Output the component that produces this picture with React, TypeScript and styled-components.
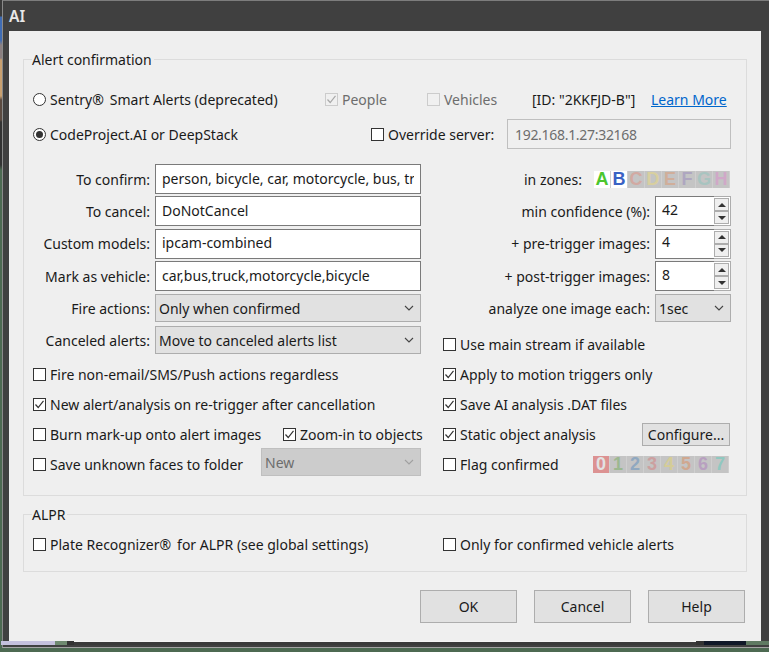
import React from 'react';
import styled, { createGlobalStyle } from 'styled-components';

const GlobalStyle = createGlobalStyle`
  html, body { margin: 0; padding: 0; background: #3a3f3c; overflow: hidden; }
  * { box-sizing: border-box; }
`;

// the desktop wallpaper only shows as a thin strip left of and below the window
const Desktop = styled.div`
  width: 769px;
  height: 652px;
  padding-left: 2px;
  font-family: "Noto Sans", "Liberation Sans", sans-serif;
  font-size: 14px;
  color: #1a1a1a;
  background: linear-gradient(
    #3a3a3a 0 16px, #3f6cb4 17px 40px, #8a7f80 45px 58px, #c8a070 60px 96px,
    #5a4a40 100px 120px, #333 122px 165px, #4d6a52 170px 648px
  );
`;

const Frame = styled.div`
  height: 648px;
  background: #404040;
  border-top: 1px solid #7d7d7d;
  border-left: 1px solid #8a8a8a;
  border-bottom: 1px solid #a4a4a4;
  padding-right: 8px;
  display: flex;
  flex-direction: column;
`;

const TitleBar = styled.div`
  height: 30px;
  padding-left: 6px;
  display: flex;
  align-items: center;
  color: #e8e8e8;
  font-weight: 600;
  font-size: 15.5px;
`;

const Content = styled.div`
  margin-left: 6px;
  width: 752px;
  height: 610px;
  flex: none;
  background: #efefef;
  padding: 28px 0 0 14px;
`;

const BottomStrip = styled.div`
  height: 4px;
  margin-left: -2px;
  display: flex;
  background: #3a3a3a;
`;

const StripPart = styled.div<{ $w: number; $c: string }>`
  width: ${p => p.$w}px;
  flex: none;
  background: ${p => p.$c};
`;

const WhiteLine = styled(StripPart)`
  height: 1px;
`;

const Group = styled.div<{ $h: number }>`
  position: relative;
  width: 724px;
  height: ${p => p.$h}px;
  border: 1px solid #dcdcdc;
  padding-left: 9px;
`;

const Legend = styled.span`
  position: absolute;
  top: -9px;
  left: 8px;
  height: 18px;
  line-height: 18px;
  padding-right: 2px;
  background: #efefef;
`;

const Row = styled.div<{ $top?: number }>`
  display: flex;
  align-items: center;
  height: 30px;
  margin-top: ${p => p.$top ?? 0}px;
`;

const Slot = styled.div<{ $w: number }>`
  width: ${p => p.$w}px;
  flex: none;
  display: flex;
  align-items: center;
`;

const Option = styled.label<{ $off?: boolean }>`
  display: inline-flex;
  align-items: center;
  gap: 4px;
  white-space: nowrap;
  color: ${p => (p.$off ? '#6d6d6d' : 'inherit')};
`;

const Box = styled.span<{ $off?: boolean }>`
  width: 13px;
  height: 13px;
  flex: none;
  display: flex;
  background: ${p => (p.$off ? '#f0f0f0' : '#fff')};
  border: 1px solid ${p => (p.$off ? '#cccccc' : '#333')};
`;

const Dial = styled.span`
  width: 13px;
  height: 13px;
  flex: none;
  display: flex;
  align-items: center;
  justify-content: center;
  background: #fff;
  border: 1px solid #333;
  border-radius: 50%;
`;

const Dot = styled.span`
  width: 7px;
  height: 7px;
  border-radius: 50%;
  background: #333;
`;

const IdText = styled.span`
  white-space: nowrap;
`;

const LearnMore = styled.a`
  color: #0066cc;
  text-decoration: underline;
  white-space: nowrap;
`;

const ServerInput = styled.div`
  width: 224px;
  height: 30px;
  padding-left: 7px;
  display: flex;
  align-items: center;
  color: #6d6d6d;
  letter-spacing: -0.3px;
  background: #efefef;
  border: 1px solid #bfbfbf;
`;

const FormGrid = styled.div`
  margin-top: 14px;
  display: grid;
  grid-template-columns: 388px 288px;
  column-gap: 22px;
  grid-template-rows: 32px 32px 33px 32px 32px 35px 30px 30px 30px 30px;
  align-items: center;
`;

const Field = styled.div`
  display: flex;
  align-items: center;
`;

const TopField = styled(Field)`
  align-self: start;
  margin-top: 2px;
`;

const Label = styled.span<{ $w: number }>`
  width: ${p => p.$w}px;
  flex: none;
  margin-right: 5px;
  white-space: nowrap;
  display: flex;
  justify-content: flex-end;
`;

const TextBox = styled.input`
  width: 266px;
  height: 30px;
  padding: 0 6px 2px;
  border: 1px solid #7a7a7a;
  background: #fff;
  font: inherit;
  color: inherit;
  outline: none;
`;

const Select = styled.div<{ $w: number; $off?: boolean; $top?: number }>`
  width: ${p => p.$w}px;
  height: 28px;
  flex: none;
  margin-top: ${p => p.$top ?? 0}px;
  padding: 0 6px 0 3px;
  display: flex;
  align-items: center;
  justify-content: space-between;
  background: ${p => (p.$off ? '#cccccc' : '#e1e1e1')};
  border: 1px solid ${p => (p.$off ? '#bfbfbf' : '#adadad')};
  color: ${p => (p.$off ? '#6d6d6d' : 'inherit')};
`;

const Spinner = styled.div`
  width: 76px;
  height: 30px;
  flex: none;
  display: flex;
`;

const SpinValue = styled.div`
  width: 59px;
  padding: 0 0 4px 6px;
  display: flex;
  align-items: center;
  background: #fff;
  border: 1px solid #7a7a7a;
  border-right: none;
`;

const SpinButtons = styled.div`
  flex: 1;
  display: flex;
  flex-direction: column;
  background: #fff;
  border: 1px solid #adadad;
  border-left: none;
  padding: 1px 1px 1px 0;
`;

const SpinButton = styled.div`
  flex: 1;
  display: flex;
  align-items: center;
  justify-content: center;
  background: #efefef;
  border: 1px solid #adadad;
`;

const Arrow = styled.span<{ $down?: boolean }>`
  width: 0;
  height: 0;
  border-left: 4px solid transparent;
  border-right: 4px solid transparent;
  ${p => (p.$down ? 'border-top: 4px solid #333;' : 'border-bottom: 4px solid #333;')}
`;

const ZonesField = styled(Field)`
  padding-left: 81px;
`;

const ChipStrip = styled.div<{ $left: number; $right?: number }>`
  display: flex;
  margin-left: ${p => p.$left}px;
  margin-right: ${p => p.$right ?? 0}px;
`;

const Chip = styled.span<{ $bg: string; $fg: string }>`
  width: 17px;
  height: 17px;
  display: flex;
  align-items: center;
  justify-content: center;
  background: ${p => p.$bg};
  color: ${p => p.$fg};
  font-family: "Liberation Sans", sans-serif;
  font-size: 18px;
  font-weight: 700;
  line-height: 17px;
  border-right: 1px solid #cfcfcf;
`;

const Spread = styled.div`
  display: flex;
  align-items: center;
  justify-content: space-between;
`;

const PushedDown = styled.div`
  margin-top: 6px;
`;

const SmallButton = styled.div`
  width: 88px;
  height: 23px;
  margin-right: 1px;
  display: flex;
  align-items: center;
  justify-content: center;
  background: #e1e1e1;
  border: 1px solid #adadad;
`;

const Footer = styled.div`
  width: 722px;
  margin-top: 18px;
  display: flex;
  justify-content: flex-end;
  gap: 17px;
`;

const DialogButton = styled.div`
  width: 97px;
  height: 33px;
  display: flex;
  align-items: center;
  justify-content: center;
  background: #e1e1e1;
  border: 1px solid #adadad;
`;

const Group2 = styled(Group)`
  margin-top: 18px;
`;

const Tick = ({ off }: { off?: boolean }) => (
  <svg width="11" height="11" viewBox="0 0 11 11" fill="none">
    <path d="M1.5 5.5 L4.2 8.5 L9.5 1.8" stroke={off ? '#a8a8a8' : '#333'} strokeWidth="1.2" />
  </svg>
);

const Chevron = ({ off }: { off?: boolean }) => (
  <svg width="10" height="6" viewBox="0 0 10 6" fill="none">
    <path d="M1 1 L5 5 L9 1" stroke={off ? '#a0a0a0' : '#444'} strokeWidth="1.1" />
  </svg>
);

const Check = ({ on, off, children }: { on?: boolean; off?: boolean; children: React.ReactNode }) => (
  <Option $off={off}>
    <Box $off={off}>{on && <Tick off={off} />}</Box>
    {children}
  </Option>
);

const Radio = ({ on, children }: { on?: boolean; children: React.ReactNode }) => (
  <Option>
    <Dial>{on && <Dot />}</Dial>
    {children}
  </Option>
);

const SpinField = ({ label, value }: { label: string; value: string }) => (
  <Field>
    <Label $w={207}>{label}</Label>
    <Spinner>
      <SpinValue>{value}</SpinValue>
      <SpinButtons>
        <SpinButton><Arrow /></SpinButton>
        <SpinButton><Arrow $down /></SpinButton>
      </SpinButtons>
    </Spinner>
  </Field>
);

const zones = [
  ['A', '#fff', '#4cc62e'],
  ['B', '#fff', '#3a62c4'],
  ['C', '#c4c4c4', '#d2a9a2'],
  ['D', '#c4c4c4', '#d8cf9f'],
  ['E', '#c4c4c4', '#d0ae9a'],
  ['F', '#c4c4c4', '#aea6c0'],
  ['G', '#c4c4c4', '#a8c4c0'],
  ['H', '#c4c4c4', '#d0a8c8'],
];

const flags = [
  ['0', '#dc9292', '#e2e2e2'],
  ['1', '#c4c4c4', '#9cb890'],
  ['2', '#c4c4c4', '#90a8c0'],
  ['3', '#c4c4c4', '#cca0a0'],
  ['4', '#c4c4c4', '#d4cc98'],
  ['5', '#c4c4c4', '#d0a890'],
  ['6', '#c4c4c4', '#b8a0c0'],
  ['7', '#c4c4c4', '#90c8c0'],
];

const App = () => (
  <Desktop>
    <GlobalStyle />
    <Frame>
      <TitleBar>AI</TitleBar>
      <Content>
        <Group $h={437}>
          <Legend>Alert confirmation</Legend>
          <Row $top={24}>
            <Slot $w={292}><Radio>Sentry®{'\u2009'} Smart Alerts (deprecated)</Radio></Slot>
            <Slot $w={102}><Check on off>People</Check></Slot>
            <Slot $w={105}><Check off>Vehicles</Check></Slot>
            <Slot $w={119}><IdText>[ID: "2KKFJD-B"]</IdText></Slot>
            <LearnMore>Learn More</LearnMore>
          </Row>
          <Row $top={5}>
            <Slot $w={338}><Radio on>CodeProject.AI or DeepStack</Radio></Slot>
            <Slot $w={136}><Check>Override server:</Check></Slot>
            <ServerInput>192.168.1.27:32168</ServerInput>
          </Row>
          <FormGrid>
            <Field>
              <Label $w={117}>To confirm:</Label>
              <TextBox readOnly value="person, bicycle, car, motorcycle, bus, truck" />
            </Field>
            <ZonesField>
              <span>in zones:</span>
              <ChipStrip $left={12}>
                {zones.map(([t, bg, fg]) => <Chip key={t} $bg={bg} $fg={fg}>{t}</Chip>)}
              </ChipStrip>
            </ZonesField>

            <Field>
              <Label $w={117}>To cancel:</Label>
              <TextBox readOnly value="DoNotCancel" />
            </Field>
            <SpinField label="min confidence (%):" value="42" />

            <Field>
              <Label $w={117}>Custom models:</Label>
              <TextBox readOnly value="ipcam-combined" />
            </Field>
            <SpinField label="+ pre-trigger images:" value="4" />

            <Field>
              <Label $w={117}>Mark as vehicle:</Label>
              <TextBox readOnly value="car,bus,truck,motorcycle,bicycle" />
            </Field>
            <SpinField label="+ post-trigger images:" value="8" />

            <Field>
              <Label $w={117}>Fire actions:</Label>
              <Select $w={266}>Only when confirmed<Chevron /></Select>
            </Field>
            <Field>
              <Label $w={207}>analyze one image each:</Label>
              <Select $w={76}>1sec<Chevron /></Select>
            </Field>

            <TopField>
              <Label $w={117}>Canceled alerts:</Label>
              <Select $w={266}>Move to canceled alerts list<Chevron /></Select>
            </TopField>
            <PushedDown><Check>Use main stream if available</Check></PushedDown>

            <Check>Fire non-email/SMS/Push actions regardless</Check>
            <Check on>Apply to motion triggers only</Check>

            <Check on>New alert/analysis on re-trigger after cancellation</Check>
            <Check on>Save AI analysis .DAT files</Check>

            <Field>
              <Slot $w={250}><Check>Burn mark-up onto alert images</Check></Slot>
              <Check on>Zoom-in to objects</Check>
            </Field>
            <Spread>
              <Check on>Static object analysis</Check>
              <SmallButton>Configure...</SmallButton>
            </Spread>

            <Spread>
              <Check>Save unknown faces to folder</Check>
              <Select $w={160} $off $top={-4}>New<Chevron off /></Select>
            </Spread>
            <Spread>
              <Check>Flag confirmed</Check>
              <ChipStrip $left={0} $right={2}>
                {flags.map(([t, bg, fg]) => <Chip key={t} $bg={bg} $fg={fg}>{t}</Chip>)}
              </ChipStrip>
            </Spread>
          </FormGrid>
        </Group>
        <Group2 $h={58}>
          <Legend>ALPR</Legend>
          <Row $top={14}>
            <Slot $w={410}><Check>Plate Recognizer®{'\u2009'} for ALPR (see global settings)</Check></Slot>
            <Check>Only for confirmed vehicle alerts</Check>
          </Row>
        </Group2>
        <Footer>
          <DialogButton>OK</DialogButton>
          <DialogButton>Cancel</DialogButton>
          <DialogButton>Help</DialogButton>
        </Footer>
      </Content>
      <BottomStrip>
        <StripPart $w={54} $c="#c4c0dc" />
        <StripPart $w={12} $c="#6f8a70" />
        <StripPart $w={7} $c="#333" />
        <WhiteLine $w={622} $c="#f4f4f4" />
        <StripPart $w={8} $c="#333" />
        <StripPart $w={42} $c="#101828" />
        <StripPart $w={24} $c="#5f7a62" />
      </BottomStrip>
    </Frame>
  </Desktop>
);

export default App;
